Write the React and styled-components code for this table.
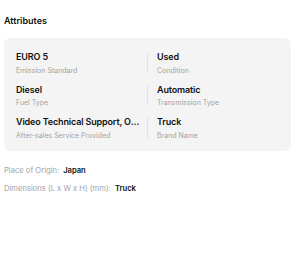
import React from "react"
import styled, { createGlobalStyle } from "styled-components"

const GlobalStyle = createGlobalStyle`
  body {
    margin: 0;
    background: #fff;
    font-family: "Inter", "Liberation Sans", sans-serif;
    color: #111;
  }
`

const Page = styled.div`
  padding: 14px 9px 0 4px;
`

const Title = styled.h3`
  margin: 0 0 10px;
  font-size: 9px;
  line-height: 14px;
  font-weight: 600;
  color: #111;
`

const Card = styled.div`
  background: #f4f4f4;
  border-radius: 6px;
  padding: 12px 12px 10px;
  display: grid;
  grid-template-columns: 1fr 1px 1fr;
  row-gap: 7px;
  align-items: center;
`

const Cell = styled.div`
  min-width: 0;
  padding-left: ${(p) => (p.right ? "9px" : "0")};
  padding-right: ${(p) => (p.right ? "0" : "3px")};
`

const Divider = styled.div`
  width: 1px;
  height: 20px;
  background: #e2e2e2;
`

const Value = styled.div`
  font-size: 9px;
  line-height: 13px;
  font-weight: 600;
  letter-spacing: -0.15px;
  color: #111;
  white-space: nowrap;
  overflow: hidden;
  text-overflow: ellipsis;
`

const Label = styled.div`
  margin-top: 2.5px;
  font-size: 7px;
  line-height: 10px;
  color: #a3a3a3;
`

const Specs = styled.div`
  margin-top: 14px;
  display: flex;
  flex-direction: column;
  gap: 6px;
`

const Spec = styled.div`
  display: flex;
  gap: 4px;
  font-size: 7.6px;
  line-height: 12px;
`

const SpecName = styled.span`
  color: #a3a3a3;
`

const SpecValue = styled.span`
  color: #111;
  font-weight: 600;
`

const rows = [
  [
    { value: "EURO 5", label: "Emission Standard" },
    { value: "Used", label: "Condition" },
  ],
  [
    { value: "Diesel", label: "Fuel Type" },
    { value: "Automatic", label: "Transmission Type" },
  ],
  [
    { value: "Video Technical Support, Online Support", label: "After-sales Service Provided" },
    { value: "Truck", label: "Brand Name" },
  ],
]

const specs = [
  { name: "Place of Origin:", value: "Japan" },
  { name: "Dimensions (L x W x H) (mm):", value: "Truck" },
]

export default function App() {
  return (
    <>
      <GlobalStyle />
      <Page>
        <Title>Attributes</Title>
        <Card>
          {rows.map(([a, b]) => (
            <React.Fragment key={a.label}>
              <Cell>
                <Value>{a.value}</Value>
                <Label>{a.label}</Label>
              </Cell>
              <Divider />
              <Cell right>
                <Value>{b.value}</Value>
                <Label>{b.label}</Label>
              </Cell>
            </React.Fragment>
          ))}
        </Card>
        <Specs>
          {specs.map((s) => (
            <Spec key={s.name}>
              <SpecName>{s.name}</SpecName>
              <SpecValue>{s.value}</SpecValue>
            </Spec>
          ))}
        </Specs>
      </Page>
    </>
  )
}
